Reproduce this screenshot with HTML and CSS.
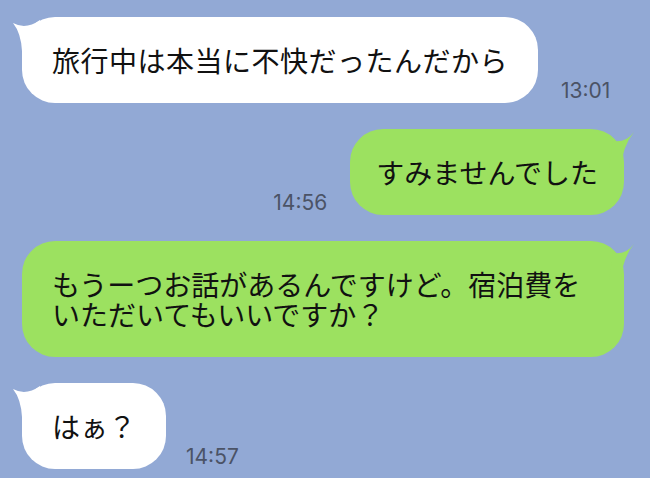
FILE: index.html
```html
<!DOCTYPE html>
<html lang="ja">
  <head>
    <meta charset="UTF-8" />
    <meta name="viewport" content="width=device-width, initial-scale=1.0" />
    <title>トーク</title>
    <link rel="stylesheet" href="styles.css">
  </head>
  <body>
    <main class="chat">
      <div class="msg msg_in">
        <div class="bubble bubble_white bubble_wide">
          <svg class="tail tail_left" width="40" height="40" viewBox="0 0 40 40">
            <path d="M3 6 Q16 13 30 3 L34 34 L12 34 Q11 16 3 6 Z" />
          </svg>
          旅行中は本当に不快だったんだから
        </div>
        <span class="time">13:01</span>
      </div>

      <div class="msg msg_out">
        <span class="time">14:56</span>
        <div class="bubble bubble_green bubble_tight">
          <svg class="tail tail_right" width="45" height="45" viewBox="0 0 45 45">
            <path d="M41 3 Q33 14 20 12 L16 40 L28 40 Q29 18 41 3 Z" />
          </svg>
          すみませんでした
        </div>
      </div>

      <div class="msg msg_out">
        <div class="bubble bubble_green">
          <svg class="tail tail_right" width="45" height="45" viewBox="0 0 45 45">
            <path d="M41 3 Q33 14 20 12 L16 40 L28 40 Q29 18 41 3 Z" />
          </svg>
          もうーつお話があるんですけど。宿泊費をいただいてもいいですか？
        </div>
      </div>

      <div class="msg msg_in msg_close">
        <div class="bubble bubble_white">
          <svg class="tail tail_left" width="40" height="40" viewBox="0 0 40 40">
            <path d="M3 6 Q16 13 30 3 L34 34 L12 34 Q11 16 3 6 Z" />
          </svg>
          はぁ？
        </div>
        <span class="time">14:57</span>
      </div>
    </main>
  </body>
</html>
```

FILE: styles.css
```css
body {
  margin: 0;

  --bg: #92a9d5;
  --white: #ffffff;
  --green: #9ce160;
  --time: #4b5366;

  background-color: var(--bg);
  font-family: "Noto Sans CJK JP", "Noto Sans", sans-serif;
  overflow: hidden;
}

.chat {
  display: flex;
  flex-direction: column;
  gap: 26px;
  padding: 17px 26px 0 22px;
  box-sizing: border-box;
  width: 650px;
  height: 478px;
}

.msg {
  display: flex;
  align-items: flex-end;
  gap: 23px;
}

.msg_close {
  gap: 20px;
}

.msg_out {
  justify-content: flex-end;
}

.bubble {
  position: relative;
  padding: 28px 30px;
  border-radius: 33px;
  font-size: 28px;
  line-height: 30px;
  color: #111;
}

.bubble_wide {
  letter-spacing: 0.5px;
}

.bubble_tight {
  padding: 28px 26px;
}

.bubble_white {
  background-color: var(--white);
}

.bubble_green {
  background-color: var(--green);
}

.tail {
  position: absolute;
  top: 0;
}

.tail_left {
  left: -12px;
  fill: var(--white);
}

.tail_right {
  right: -14px;
  fill: var(--green);
}

.time {
  font-family: "Inter", "Liberation Sans", sans-serif;
  font-size: 21px;
  line-height: 21px;
  color: var(--time);
  margin-bottom: 2px;
}
```
